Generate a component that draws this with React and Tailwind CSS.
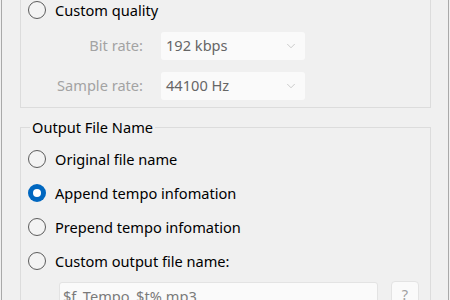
import { ChevronDown } from 'lucide-react'

const Radio = ({ checked, label }) => (
  <div className="flex items-center h-[18px] gap-[9px]">
    {checked ? (
      <span className="w-[18px] h-[18px] rounded-full bg-[#0067c0] flex items-center justify-center">
        <span className="w-[8px] h-[8px] rounded-full bg-white" />
      </span>
    ) : (
      <span className="w-[18px] h-[18px] rounded-full border-[1.5px] border-[#5c5c5c] bg-[#f3f3f3]" />
    )}
    <span className="text-[14.6px] leading-none text-black">{label}</span>
  </div>
)

const Combo = ({ value }) => (
  <div className="h-[28px] w-[144px] bg-[#fafafa] rounded-[3px] flex items-center justify-between pl-[5px] pr-[7px]">
    <span className="text-[14.6px] text-[#666666]">{value}</span>
    <ChevronDown size={14} strokeWidth={1} className="text-[#a8a8a8]" />
  </div>
)

export default function App() {
  return (
    <div className="w-[450px] h-[300px] overflow-hidden bg-[#f0f0f0] font-['Noto_Sans',sans-serif]">
      <div className="ml-px w-[448px] h-[300px] border-x border-[#a9a9a9] pl-[18px]">
        {/* quality group (top cut off) */}
        <div className="w-[411px] h-[108px] border-x border-b border-[#dcdcdc] pt-px pl-[7px]">
          <Radio label="Custom quality" />
          <div className="mt-[13px] grid grid-cols-[115px_144px] gap-x-[18px] gap-y-[12px] items-center -ml-[7px] pl-[7px]">
            <span className="text-right text-[14.6px] text-[#a3a3a3]">Bit rate:</span>
            <Combo value="192 kbps" />
            <span className="text-right text-[14.6px] text-[#a3a3a3]">Sample rate:</span>
            <Combo value="44100 Hz" />
          </div>
        </div>

        <fieldset className="mt-[9px] w-[411px] border border-[#dcdcdc] pl-[7px] pb-4">
          <legend className="ml-[2px] px-[2px] text-[14.6px] leading-[20px] text-black">Output File Name</legend>
          <div className="mt-[13px] flex flex-col gap-[16px]">
            <Radio label="Original file name" />
            <Radio checked label="Append tempo infomation" />
            <Radio label="Prepend tempo infomation" />
            <Radio label="Custom output file name:" />
          </div>
          <div className="mt-[12px] flex items-start gap-[13px] pl-[31px]">
            <div className="w-[319px] h-[28px] bg-[#fafafa] border border-[#e3e3e3] rounded-[3px] px-[3px] text-[14.6px] leading-[26px] text-[#7a7a7a]">
              $f_Tempo_$t%.mp3
            </div>
            <div className="-mt-px w-[28px] h-[28px] bg-[#fafafa] border border-[#e3e3e3] rounded-[4px] flex items-center justify-center text-[14.6px] text-[#a0a0a0]">
              ?
            </div>
          </div>
        </fieldset>
      </div>
    </div>
  )
}
